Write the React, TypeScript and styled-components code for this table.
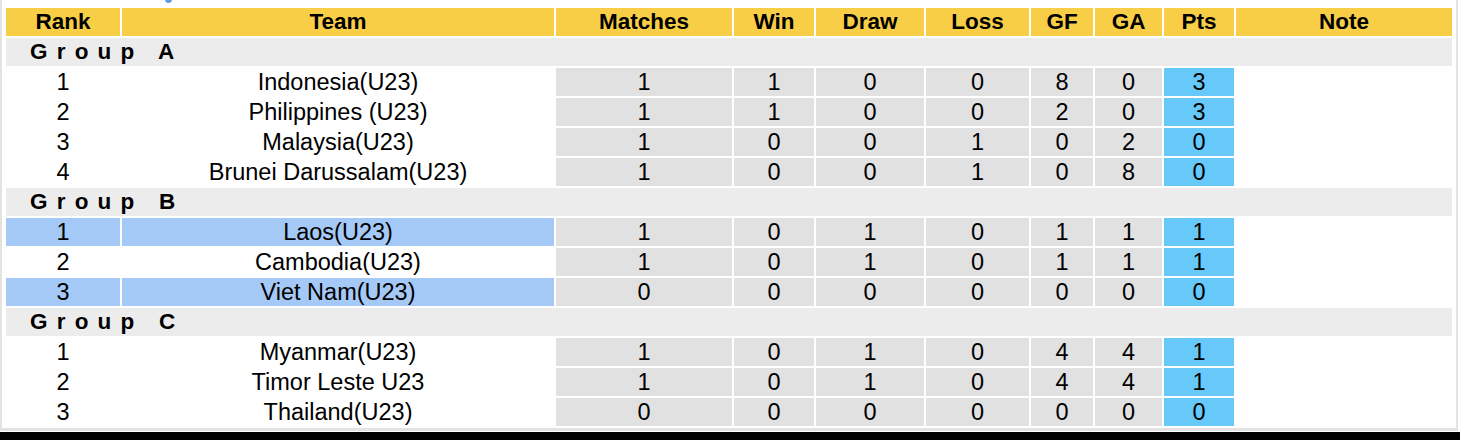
import React from 'react';
import styled, {createGlobalStyle} from 'styled-components';

const GlobalStyle = createGlobalStyle`
    html, body { margin: 0; padding: 0; background: #fff; }
    body { font-family: "Liberation Sans", Arial, Helvetica, sans-serif; color: #000; }
`;

const Page = styled.div`
    width: 1460px;
    height: 440px;
    overflow: hidden;
    background: #fff;
`;

const Frame = styled.div`
    position: relative;
    width: 1458px;
    box-sizing: border-box;
    padding: 6px 2px 0 2px;
    border-left: 2px solid #e3e3e3;
    border-right: 2px solid #e3e3e3;
    border-bottom: 3px solid #e3e3e3;
`;

const PeekIcon = styled.span`
    position: absolute;
    left: 163px;
    top: -5px;
    width: 7px;
    height: 8px;
    border-radius: 50%;
    background: #5a9be6;
`;

const Table = styled.table`
    width: 100%;
    table-layout: fixed;
    border-collapse: separate;
    border-spacing: 2px;
`;

const HeadCell = styled.th`
    height: 28px;
    padding: 0;
    background: #f8ce47;
    font-size: 22.5px;
    font-weight: 700;
    line-height: 28px;
    text-align: center;
`;

const GroupCell = styled.td`
    height: 28px;
    padding: 0 0 0 24px;
    background: #ececec;
    font-size: 22.5px;
    font-weight: 700;
    letter-spacing: 9.2px;
    line-height: 28px;
    text-align: left;
`;

const Cell = styled.td`
    height: 28px;
    padding: 0;
    font-size: 23.5px;
    line-height: 28px;
    text-align: center;
    white-space: nowrap;
`;

const NameCell = styled(Cell)<{$hl?: boolean}>`
    background: ${({$hl}) => ($hl ? '#a5c9f7' : '#fff')};
`;

const StatCell = styled(Cell)`
    background: #e1e1e1;
`;

const PtsCell = styled(Cell)`
    background: #67c8fa;
`;

const NoteCell = styled(Cell)`
    background: #fff;
`;

const BottomBar = styled.div`
    height: 10px;
    margin-top: 1px;
    background: #000;
`;

type Team = {
    rank: number;
    name: string;
    m: number; w: number; d: number; l: number;
    gf: number; ga: number; pts: number;
    hl?: boolean;
};

const groups: {name: string; teams: Team[]}[] = [
    {
        name: 'Group A',
        teams: [
            {rank: 1, name: 'Indonesia(U23)', m: 1, w: 1, d: 0, l: 0, gf: 8, ga: 0, pts: 3},
            {rank: 2, name: 'Philippines (U23)', m: 1, w: 1, d: 0, l: 0, gf: 2, ga: 0, pts: 3},
            {rank: 3, name: 'Malaysia(U23)', m: 1, w: 0, d: 0, l: 1, gf: 0, ga: 2, pts: 0},
            {rank: 4, name: 'Brunei Darussalam(U23)', m: 1, w: 0, d: 0, l: 1, gf: 0, ga: 8, pts: 0},
        ],
    },
    {
        name: 'Group B',
        teams: [
            {rank: 1, name: 'Laos(U23)', m: 1, w: 0, d: 1, l: 0, gf: 1, ga: 1, pts: 1, hl: true},
            {rank: 2, name: 'Cambodia(U23)', m: 1, w: 0, d: 1, l: 0, gf: 1, ga: 1, pts: 1},
            {rank: 3, name: 'Viet Nam(U23)', m: 0, w: 0, d: 0, l: 0, gf: 0, ga: 0, pts: 0, hl: true},
        ],
    },
    {
        name: 'Group C',
        teams: [
            {rank: 1, name: 'Myanmar(U23)', m: 1, w: 0, d: 1, l: 0, gf: 4, ga: 4, pts: 1},
            {rank: 2, name: 'Timor Leste U23', m: 1, w: 0, d: 1, l: 0, gf: 4, ga: 4, pts: 1},
            {rank: 3, name: 'Thailand(U23)', m: 0, w: 0, d: 0, l: 0, gf: 0, ga: 0, pts: 0},
        ],
    },
];

const columns = [
    {label: 'Rank', width: 114},
    {label: 'Team', width: 432},
    {label: 'Matches', width: 176},
    {label: 'Win', width: 80},
    {label: 'Draw', width: 108},
    {label: 'Loss', width: 103},
    {label: 'GF', width: 62},
    {label: 'GA', width: 67},
    {label: 'Pts', width: 70},
    {label: 'Note', width: 216},
];

export default function App() {
    return (
        <Page>
            <GlobalStyle/>
            <Frame>
                <PeekIcon/>
                <Table>
                    <colgroup>
                        {columns.map(c => <col key={c.label} style={{width: c.width}}/>)}
                    </colgroup>
                    <thead>
                    <tr>
                        {columns.map(c => <HeadCell key={c.label}>{c.label}</HeadCell>)}
                    </tr>
                    </thead>
                    <tbody>
                    {groups.map(g => (
                        <React.Fragment key={g.name}>
                            <tr><GroupCell colSpan={10}>{g.name}</GroupCell></tr>
                            {g.teams.map(t => (
                                <tr key={t.name}>
                                    <NameCell $hl={t.hl}>{t.rank}</NameCell>
                                    <NameCell $hl={t.hl}>{t.name}</NameCell>
                                    <StatCell>{t.m}</StatCell>
                                    <StatCell>{t.w}</StatCell>
                                    <StatCell>{t.d}</StatCell>
                                    <StatCell>{t.l}</StatCell>
                                    <StatCell>{t.gf}</StatCell>
                                    <StatCell>{t.ga}</StatCell>
                                    <PtsCell>{t.pts}</PtsCell>
                                    <NoteCell/>
                                </tr>
                            ))}
                        </React.Fragment>
                    ))}
                    </tbody>
                </Table>
            </Frame>
            <BottomBar/>
        </Page>
    );
}
